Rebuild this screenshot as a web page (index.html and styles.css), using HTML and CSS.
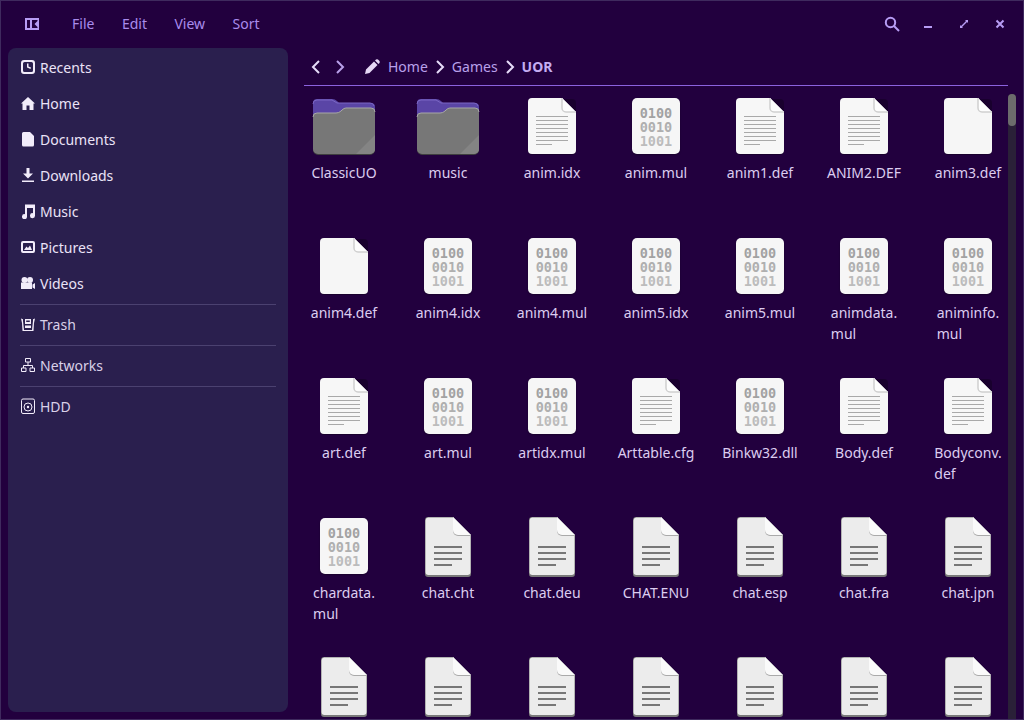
FILE: index.html
```html
<!DOCTYPE html>
<html lang="en">
<head>
    <meta charset="UTF-8">
    <title>UOR</title>
    <link rel="stylesheet" href="styles.css">
</head>
<body>
    <svg class="defs" width="0" height="0">
        <symbol id="file-lines" viewBox="0 0 64 64">
            <rect x="8" y="4" width="48" height="56" rx="4" fill="#000" opacity=".25" transform="translate(0 1)"/>
            <path d="M12 4H42L56 18V56a4 4 0 0 1-4 4H12a4 4 0 0 1-4-4V8a4 4 0 0 1 4-4Z" fill="#f7f7f7"/>
            <path d="M42 4L56 18H46a4 4 0 0 1-4-4Z" fill="#fdfdfd"/>
            <path d="M42 4V14a4 4 0 0 0 4 4H56" fill="none" stroke="#cfcfcf" stroke-width="1.5"/>
            <path d="M16 22.500H48M16 26.500H48M16 30.500H48M16 34.500H48M16 38.500H48M16 42.500H48M16 46.500H48M16 50.500H32" stroke="#a9a9a9"/>
        </symbol>
        <symbol id="file-blank" viewBox="0 0 64 64">
            <rect x="8" y="4" width="48" height="56" rx="4" fill="#000" opacity=".25" transform="translate(0 1)"/>
            <path d="M12 4H42L56 18V56a4 4 0 0 1-4 4H12a4 4 0 0 1-4-4V8a4 4 0 0 1 4-4Z" fill="#f6f6f6"/>
            <path d="M42 4L56 18H46a4 4 0 0 1-4-4Z" fill="#fdfdfd"/>
            <path d="M42 4V14a4 4 0 0 0 4 4H56" fill="none" stroke="#cfcfcf" stroke-width="1.5"/>
        </symbol>
        <symbol id="file-text" viewBox="0 0 64 64">
            <path d="M12 3H37L55 21V60a3 3 0 0 1-3 3H12a3 3 0 0 1-3-3V6a3 3 0 0 1 3-3Z" fill="#7a7a7a"/>
            <path d="M12 3.500H37L54.500 21V58a3 3 0 0 1-3 3H12.500a3 3 0 0 1-3-3V6.500a3 3 0 0 1 2.500-3Z" fill="#ececec"/>
            <path d="M37 3V17a5 5 0 0 0 5 5H55Z" fill="#aaa"/>
            <path d="M37 3L55 21H42a5 5 0 0 1-5-5Z" fill="#fafafa"/>
            <path d="M18 33H46M18 39H46M18 45H46M18 51H36" stroke="#777" stroke-width="2"/>
        </symbol>
        <symbol id="folder" viewBox="0 0 64 64">
            <path d="M5 5H20Q23 5 25 7L27 9H59a4 4 0 0 1 4 4V30H1V9a4 4 0 0 1 4-4Z" fill="#5a45a6"/>
            <path d="M1 10a4 4 0 0 1 4-4H20L25 9H58a4 4 0 0 1 4 3" fill="none" stroke="#7a66c4"/>
            <path d="M5 19H24Q27 19 29 17L30 16Q32 14 34 14H59a4 4 0 0 1 4 4V56a5 5 0 0 1-5 5H6a5 5 0 0 1-5-5V23a4 4 0 0 1 4-4Z" fill="#3f3f3f"/>
            <path d="M5 19H24Q27 19 29 17L30 16Q32 14 34 14H59a4 4 0 0 1 4 4V55a5 5 0 0 1-5 5H6a5 5 0 0 1-5-5V23a4 4 0 0 1 4-4Z" fill="#777"/>
            <path d="M1 23a4 4 0 0 1 4-4H24Q27 19 29 17L30 16Q32 14 34 14H59a4 4 0 0 1 4 4" fill="none" stroke="#a8a8a8"/>
            <path d="M63 41V55a5 5 0 0 1-5 5H44Z" fill="#848484"/>
        </symbol>
        <symbol id="i-recents" viewBox="0 0 16 16">
            <path fill-rule="evenodd" d="M4 1H12a3 3 0 0 1 3 3V12a3 3 0 0 1-3 3H4a3 3 0 0 1-3-3V4a3 3 0 0 1 3-3ZM4.500 3A1.500 1.500 0 0 0 3 4.500V11.500A1.500 1.500 0 0 0 4.500 13H11.500A1.500 1.500 0 0 0 13 11.500V4.500A1.500 1.500 0 0 0 11.500 3Z"/>
            <path d="M7 4.500H8.500V7.500L11 8.500L10.500 10L7 8.500Z"/>
        </symbol>
        <symbol id="i-home" viewBox="0 0 16 16">
            <path fill-rule="evenodd" d="M8 2L15 8.500H13.500V15H9.500V10.500H6.500V15H2.500V8.500H1Z"/>
        </symbol>
        <symbol id="i-documents" viewBox="0 0 16 16">
            <path d="M3.500 1H10L14 5V14a1.500 1.500 0 0 1-1.500 1.500H3.500A1.500 1.500 0 0 1 2 14V2.500A1.500 1.500 0 0 1 3.500 1Z"/>
        </symbol>
        <symbol id="i-downloads" viewBox="0 0 16 16">
            <path d="M6.500 1H9.500V6.500H13L8 11.500L3 6.500H6.500ZM2 13.500H14V15H2Z"/>
        </symbol>
        <symbol id="i-music" viewBox="0 0 16 16">
            <path d="M5 1.500H15V12.500A2.500 2.500 0 1 1 13 10.200V5H7V13.500A2.500 2.500 0 1 1 5 11.200Z"/>
        </symbol>
        <symbol id="i-pictures" viewBox="0 0 16 16">
            <path fill-rule="evenodd" d="M3 2H13a2 2 0 0 1 2 2V12a2 2 0 0 1-2 2H3a2 2 0 0 1-2-2V4a2 2 0 0 1 2-2ZM3.500 4A.500 .500 0 0 0 3 4.500V11.500A.500 .500 0 0 0 3.500 12H12.500A.500 .500 0 0 0 13 11.500V4.500A.500 .500 0 0 0 12.500 4Z"/>
            <path d="M4 11L6.500 7.500L8 9L10 6.500L12 11Z"/>
        </symbol>
        <symbol id="i-videos" viewBox="0 0 16 16">
            <circle cx="4.500" cy="5" r="3"/>
            <circle cx="10" cy="5" r="3"/>
            <path d="M1 7.500H12V14H1ZM12.500 9.500L15 8V14L12.500 12.500Z"/>
        </symbol>
        <symbol id="i-trash" viewBox="0 0 16 16">
            <path fill-rule="evenodd" d="M1 2.500L3 3.300V5L4 14H12L13 5V3.300L15 2.500L14 7L13.500 15H2.500L2 7ZM5 3H11V8H5ZM6.200 4.500V6H9.800V4.500ZM5 9.500H11V12H5Z"/>
        </symbol>
        <symbol id="i-networks" viewBox="0 0 16 16">
            <path fill="none" stroke="currentColor" d="M5.500 1.500H10.500V5H5.500ZM8 5V8.500M3.500 8.500H12.500V11M3.500 8.500V11M1.500 11H6V14.500H1.500ZM10 11H14.500V14.500H10Z"/>
        </symbol>
        <symbol id="i-hdd" viewBox="0 0 16 16">
            <rect x="1.500" y="1" width="13" height="14.500" rx="1.500" fill="none" stroke="currentColor"/>
            <circle cx="8" cy="9" r="4" fill="none" stroke="currentColor"/>
            <circle cx="8" cy="9" r="1.200"/>
        </symbol>
    </svg>

    <div class="window">
        <header class="titlebar">
            <svg class="toggle" viewBox="0 0 14 12" width="14" height="12">
                <path fill-rule="evenodd" d="M0 0H14V12H0ZM2 2V10H5V2ZM7 2V10H12.500V9L9.500 6L12.500 3V2Z"/>
            </svg>
            <nav class="menu">
                <span>File</span>
                <span>Edit</span>
                <span>View</span>
                <span>Sort</span>
            </nav>
            <div class="controls">
                <svg viewBox="0 0 16 16" width="16" height="16"><circle cx="6.500" cy="6.500" r="4.700" fill="none" stroke="currentColor" stroke-width="2"/><path d="M10 10L15 15" stroke="currentColor" stroke-width="2"/></svg>
                <svg viewBox="0 0 16 16" width="16" height="16"><path d="M4 10H12V12H4Z"/></svg>
                <svg viewBox="0 0 16 16" width="16" height="16"><path d="M9 4H12V7L11 6L6 11L7 12H4V9L5 10L10 5Z"/></svg>
                <svg viewBox="0 0 16 16" width="16" height="16"><path d="M4.500 4.500L11.500 11.500M11.500 4.500L4.500 11.500" stroke="currentColor" stroke-width="2"/></svg>
            </div>
        </header>

        <div class="content">
            <aside class="sidebar">
                <a class="place"><svg><use href="#i-recents"/></svg>Recents</a>
                <a class="place"><svg><use href="#i-home"/></svg>Home</a>
                <a class="place"><svg><use href="#i-documents"/></svg>Documents</a>
                <a class="place"><svg><use href="#i-downloads"/></svg>Downloads</a>
                <a class="place"><svg><use href="#i-music"/></svg>Music</a>
                <a class="place"><svg><use href="#i-pictures"/></svg>Pictures</a>
                <a class="place"><svg><use href="#i-videos"/></svg>Videos</a>
                <hr class="first">
                <a class="place place-dim"><svg><use href="#i-trash"/></svg>Trash</a>
                <hr>
                <a class="place place-dim"><svg><use href="#i-networks"/></svg>Networks</a>
                <hr>
                <a class="place place-dim"><svg><use href="#i-hdd"/></svg>HDD</a>
            </aside>

            <main class="main">
                <div class="pathbar">
                    <svg class="chev chev-back" viewBox="0 0 10 16" width="10" height="16"><path d="M8 2L2 8L8 14" fill="none" stroke="currentColor" stroke-width="2"/></svg>
                    <svg class="chev chev-fwd" viewBox="0 0 10 16" width="10" height="16"><path d="M2 2L8 8L2 14" fill="none" stroke="currentColor" stroke-width="2"/></svg>
                    <svg class="pencil" viewBox="0 0 16 16" width="16" height="16"><path d="M1 15L2 10.500L10 2.500L13.500 6L5.500 14ZM11 1.500L12 .5Q13 0 14 .5L15.500 2Q16 3 15.500 4L14.500 5Z"/></svg>
                    <span class="crumb">Home</span>
                    <svg class="sep" viewBox="0 0 10 16" width="10" height="16"><path d="M2 2L8 8L2 14" fill="none" stroke="currentColor" stroke-width="2"/></svg>
                    <span class="crumb">Games</span>
                    <svg class="sep" viewBox="0 0 10 16" width="10" height="16"><path d="M2 2L8 8L2 14" fill="none" stroke="currentColor" stroke-width="2"/></svg>
                    <span class="crumb crumb-current">UOR</span>
                </div>

                <div class="browser">
                    <div class="grid">
                        <div class="tile"><svg><use href="#folder"/></svg><span>ClassicUO</span></div>
                        <div class="tile"><svg><use href="#folder"/></svg><span>music</span></div>
                        <div class="tile"><svg><use href="#file-lines"/></svg><span>anim.idx</span></div>
                        <div class="tile"><div class="bin"><i>0100</i><i>0010</i><i>1001</i></div><span>anim.mul</span></div>
                        <div class="tile"><svg><use href="#file-lines"/></svg><span>anim1.def</span></div>
                        <div class="tile"><svg><use href="#file-lines"/></svg><span>ANIM2.DEF</span></div>
                        <div class="tile"><svg><use href="#file-blank"/></svg><span>anim3.def</span></div>

                        <div class="tile"><svg><use href="#file-blank"/></svg><span>anim4.def</span></div>
                        <div class="tile"><div class="bin"><i>0100</i><i>0010</i><i>1001</i></div><span>anim4.idx</span></div>
                        <div class="tile"><div class="bin"><i>0100</i><i>0010</i><i>1001</i></div><span>anim4.mul</span></div>
                        <div class="tile"><div class="bin"><i>0100</i><i>0010</i><i>1001</i></div><span>anim5.idx</span></div>
                        <div class="tile"><div class="bin"><i>0100</i><i>0010</i><i>1001</i></div><span>anim5.mul</span></div>
                        <div class="tile"><div class="bin"><i>0100</i><i>0010</i><i>1001</i></div><span>animdata.<br>mul</span></div>
                        <div class="tile"><div class="bin"><i>0100</i><i>0010</i><i>1001</i></div><span>animinfo.<br>mul</span></div>

                        <div class="tile"><svg><use href="#file-lines"/></svg><span>art.def</span></div>
                        <div class="tile"><div class="bin"><i>0100</i><i>0010</i><i>1001</i></div><span>art.mul</span></div>
                        <div class="tile"><div class="bin"><i>0100</i><i>0010</i><i>1001</i></div><span>artidx.mul</span></div>
                        <div class="tile"><svg><use href="#file-lines"/></svg><span>Arttable.cfg</span></div>
                        <div class="tile"><div class="bin"><i>0100</i><i>0010</i><i>1001</i></div><span>Binkw32.dll</span></div>
                        <div class="tile"><svg><use href="#file-lines"/></svg><span>Body.def</span></div>
                        <div class="tile"><svg><use href="#file-lines"/></svg><span>Bodyconv.<br>def</span></div>

                        <div class="tile"><div class="bin"><i>0100</i><i>0010</i><i>1001</i></div><span>chardata.<br>mul</span></div>
                        <div class="tile"><svg><use href="#file-text"/></svg><span>chat.cht</span></div>
                        <div class="tile"><svg><use href="#file-text"/></svg><span>chat.deu</span></div>
                        <div class="tile"><svg><use href="#file-text"/></svg><span>CHAT.ENU</span></div>
                        <div class="tile"><svg><use href="#file-text"/></svg><span>chat.esp</span></div>
                        <div class="tile"><svg><use href="#file-text"/></svg><span>chat.fra</span></div>
                        <div class="tile"><svg><use href="#file-text"/></svg><span>chat.jpn</span></div>

                        <div class="tile"><svg><use href="#file-text"/></svg></div>
                        <div class="tile"><svg><use href="#file-text"/></svg></div>
                        <div class="tile"><svg><use href="#file-text"/></svg></div>
                        <div class="tile"><svg><use href="#file-text"/></svg></div>
                        <div class="tile"><svg><use href="#file-text"/></svg></div>
                        <div class="tile"><svg><use href="#file-text"/></svg></div>
                        <div class="tile"><svg><use href="#file-text"/></svg></div>
                    </div>
                    <div class="scrollbar"><div class="thumb"></div></div>
                </div>
            </main>
        </div>
    </div>
</body>
</html>
```

FILE: styles.css
```css
html, body {
    margin: 0;
    height: 100%;
}
body {
    font-family: "Noto Sans", sans-serif;
    font-size: 14px;
    background: #22003e;
    overflow: hidden;
}
.defs {
    position: absolute;
}
.window {
    box-sizing: border-box;
    width: 1024px;
    height: 720px;
    display: flex;
    flex-direction: column;
    background: #22003e;
    border: 1px solid #3f2a5e;
}
.titlebar {
    box-sizing: border-box;
    height: 47px;
    flex: none;
    display: flex;
    align-items: center;
    color: #a98cec;
    padding: 0 15px 2px 24px;
}
.toggle {
    fill: #b79cf4;
}
.menu {
    display: flex;
    gap: 27.5px;
    margin-left: 33px;
    line-height: 20px;
}
.controls {
    margin-left: auto;
    display: flex;
    gap: 20px;
    color: #b79cf4;
    fill: #b79cf4;
}
.content {
    flex: 1;
    min-height: 0;
    display: flex;
    padding-left: 7px;
}
.sidebar {
    box-sizing: border-box;
    width: 280px;
    flex: none;
    margin-bottom: 7px;
    padding: 1px 12px 0;
    background: #2a1f4e;
    border-radius: 8px;
}
.place {
    height: 36px;
    display: flex;
    align-items: center;
    gap: 4px;
    color: #ebe3f7;
    fill: #f2ecfa;
}
.place svg {
    width: 16px;
    height: 16px;
    color: #f2ecfa;
}
.place-dim {
    box-sizing: border-box;
    height: 40px;
    padding-bottom: 2px;
    color: #d9d0e8;
}
.sidebar hr {
    margin: 0;
    border: 0;
    border-top: 1px solid #4b4170;
}
.sidebar hr.first {
    margin-top: 3px;
}
.main {
    width: 712px;
    margin-left: 16px;
    display: flex;
    flex-direction: column;
    min-height: 0;
}
.pathbar {
    box-sizing: border-box;
    width: 704px;
    height: 38px;
    flex: none;
    display: flex;
    align-items: center;
    border-bottom: 1px solid #8b62de;
    color: #b9a0ea;
    padding-left: 7px;
}
.chev-back {
    color: #e6dbf8;
}
.chev-fwd {
    color: #b9a0ea;
    margin-left: 14px;
}
.pencil {
    fill: #e6d8f5;
    margin-left: 19px;
    margin-right: 8px;
}
.crumb {
    line-height: 20px;
}
.crumb-current {
    font-weight: 700;
    color: #c4adf2;
}
.sep {
    margin: 0 7px;
    color: #e6dbf8;
}
.browser {
    flex: 1;
    min-height: 0;
    display: flex;
    overflow: hidden;
}
.grid {
    width: 704px;
    flex: none;
    display: grid;
    grid-template-columns: repeat(7, 80px);
    grid-auto-rows: 140px;
    column-gap: 24px;
    padding-top: 8px;
    align-self: flex-start;
}
.tile {
    display: flex;
    flex-direction: column;
    align-items: center;
    color: #dccdf0;
    line-height: 21px;
}
.tile svg {
    width: 64px;
    height: 64px;
    flex: none;
}
.tile span {
    margin-top: 4px;
    white-space: nowrap;
}
/* binary file icon, digits are plain text */
.bin {
    box-sizing: border-box;
    width: 48px;
    height: 56px;
    margin: 4px 0;
    padding-top: 8px;
    flex: none;
    display: flex;
    flex-direction: column;
    align-items: center;
    background: #f6f6f6;
    border-radius: 5px;
    box-shadow: 0 1px 2px rgba(0,0,0,0.3);
    font-family: "DejaVu Sans Mono", monospace;
    font-size: 13.5px;
    font-weight: 700;
    line-height: 14px;
}
.bin i {
    font-style: normal;
    color: #a2a2a2;
}
.bin i:nth-child(2) {
    color: #afafaf;
}
.bin i:nth-child(3) {
    color: #bcbcbc;
}
.scrollbar {
    width: 8px;
    margin-top: 8px;
    background: #2a2038;
    border-radius: 4px 4px 0 0;
}
.thumb {
    height: 32px;
    background: #6c6c6c;
    border-radius: 4px;
}
```
